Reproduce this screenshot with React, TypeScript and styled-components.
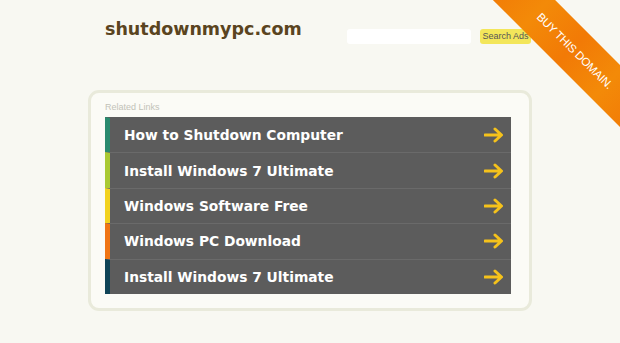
import styled, { createGlobalStyle } from 'styled-components';

const GlobalStyle = createGlobalStyle`
  html, body {
    margin: 0;
    padding: 0;
    background: #f8f8f2;
    overflow: hidden;
  }
`;

const links = [
  { title: 'How to Shutdown Computer', color: '#2a8a6e' },
  { title: 'Install Windows 7 Ultimate', color: '#a9c933' },
  { title: 'Windows Software Free', color: '#f2d21e' },
  { title: 'Windows PC Download', color: '#f07514' },
  { title: 'Install Windows 7 Ultimate', color: '#0f4457' },
];

const Page = styled.div`
  position: relative;
  width: 620px;
  height: 343px;
  overflow: hidden;
  font-family: 'DejaVu Sans', sans-serif;
`;

const Header = styled.header`
  display: flex;
  align-items: center;
  height: 58px;
  padding: 0 89px 0 105px;
`;

const Logo = styled.h1`
  margin: 0 0 1px;
  font-size: 17.5px;
  font-weight: bold;
  color: #5a4420;
`;

const SearchForm = styled.form`
  display: flex;
  align-items: center;
  gap: 9px;
  margin-left: auto;
  margin-top: 14px;
`;

const SearchInput = styled.input`
  width: 124px;
  height: 15px;
  border: none;
  border-radius: 3px;
  background: #ffffff;
  padding: 0;
  outline: none;
`;

const SearchButton = styled.button`
  height: 15px;
  width: 51px;
  padding: 0;
  border: none;
  border-radius: 3px;
  background: #f3e65a;
  color: #555555;
  font-family: 'Liberation Sans', Arial, sans-serif;
  font-size: 9px;
  line-height: 15px;
`;

const Ribbon = styled.div`
  position: absolute;
  top: 26px;
  left: 472px;
  width: 200px;
  height: 44px;
  transform: rotate(45deg);
  background: repeating-linear-gradient(
    90deg,
    #f27a06 0px,
    #f38a08 50px,
    #f27a06 100px
  );
  color: #ffffff;
  font-family: 'Liberation Sans', Arial, sans-serif;
  font-size: 11.5px;
  display: flex;
  align-items: center;
  justify-content: center;
  padding-left: 8px;
  box-sizing: border-box;
  letter-spacing: -0.2px;
`;

const Panel = styled.section`
  margin: 32px 88px 0;
  height: 221px;
  box-sizing: border-box;
  border: 3px solid #e9eadb;
  border-radius: 11px;
  background: #fbfbf6;
  padding: 9px 18px 0 14px;
`;

const PanelLabel = styled.div`
  font-family: 'Liberation Sans', Arial, sans-serif;
  font-size: 9px;
  color: #c2c2b8;
  height: 15px;
  line-height: 11px;
`;

const LinkList = styled.ul`
  list-style: none;
  margin: 0;
  padding: 0;
  background: #5c5c5c;
`;

const LinkRow = styled.li<{ $accent: string }>`
  display: flex;
  align-items: center;
  height: 35.4px;
  box-sizing: border-box;
  border-left: 5px solid ${(p) => p.$accent};
  border-top: 1px solid #6a6a6a;
  padding: 0 7px 0 14px;
  color: #ffffff;
  font-size: 13.8px;
  font-weight: bold;

  &:first-child {
    border-top-color: #5c5c5c;
  }
`;

const LinkText = styled.span`
  flex: 1;
`;

const Arrow = () => (
  <svg width="20" height="16" viewBox="0 0 20 16">
    <path
      d="M1 8 H17 M11 2 L17.5 8 L11 14"
      fill="none"
      stroke="#f5c21b"
      strokeWidth="3"
      strokeLinecap="round"
      strokeLinejoin="round"
    />
  </svg>
);

export default function App() {
  return (
    <Page>
      <GlobalStyle />
      <Header>
        <Logo>shutdownmypc.com</Logo>
        <SearchForm onSubmit={(e) => e.preventDefault()}>
          <SearchInput type="text" />
          <SearchButton type="submit">Search Ads</SearchButton>
        </SearchForm>
      </Header>
      <Panel>
        <PanelLabel>Related Links</PanelLabel>
        <LinkList>
          {links.map((link, i) => (
            <LinkRow key={i} $accent={link.color}>
              <LinkText>{link.title}</LinkText>
              <Arrow />
            </LinkRow>
          ))}
        </LinkList>
      </Panel>
      <Ribbon>BUY THIS DOMAIN.</Ribbon>
    </Page>
  );
}
